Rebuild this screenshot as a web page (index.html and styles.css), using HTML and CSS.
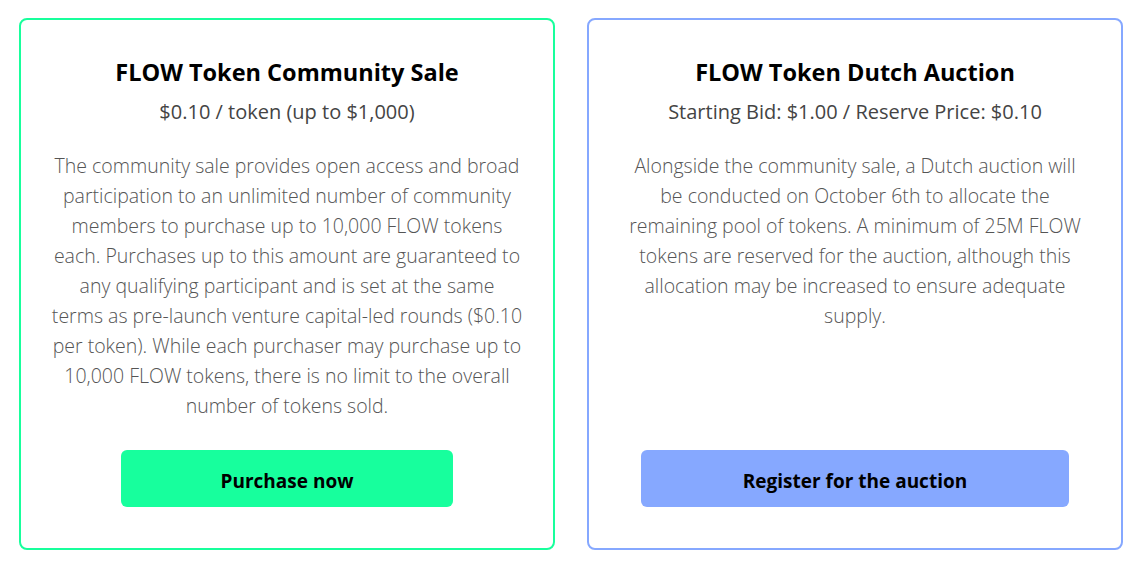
FILE: index.html
```html
<!DOCTYPE html>
<html>
<head>
<meta charset="utf-8">
<link rel="stylesheet" href="styles.css">
</head>
<body>
<div class="grid">
  <div class="card card-green">
    <h2 class="title">FLOW Token Community Sale</h2>
    <p class="sub">$0.10 / token (up to $1,000)</p>
    <p class="desc">The community sale provides open access and broad<br>participation to an unlimited number of community<br>members to purchase up to 10,000 FLOW tokens<br>each. Purchases up to this amount are guaranteed to<br>any qualifying participant and is set at the same<br>terms as pre-launch venture capital-led rounds ($0.10<br>per token). While each purchaser may purchase up to<br>10,000 FLOW tokens, there is no limit to the overall<br>number of tokens sold.</p>
    <a class="btn btn-green">Purchase now</a>
  </div>
  <div class="card card-blue">
    <h2 class="title">FLOW Token Dutch Auction</h2>
    <p class="sub">Starting Bid: $1.00 / Reserve Price: $0.10</p>
    <p class="desc">Alongside the community sale, a Dutch auction will<br>be conducted on October 6th to allocate the<br>remaining pool of tokens. A minimum of 25M FLOW<br>tokens are reserved for the auction, although this<br>allocation may be increased to ensure adequate<br>supply.</p>
    <a class="btn btn-blue">Register for the auction</a>
  </div>
</div>
</body>
</html>
```
FILE: styles.css
```css
* { box-sizing: border-box; }
html, body { margin: 0; padding: 0; background: #fff; }
body {
  font-family: "Open Sans", "Noto Sans", sans-serif;
  color: #000;
}
.grid {
  display: grid;
  grid-template-columns: 536px 536px;
  column-gap: 32px;
  padding: 18px 19px 16px 19px;
}
.card {
  border: 2px solid #18ff9c;
  border-radius: 8px;
  height: 532px;
  display: flex;
  flex-direction: column;
  align-items: center;
  padding: 38px 16px 41px;
  text-align: center;
}
.card-green { border-color: #18ff9c; }
.card-blue { border-color: #86a8ff; }
.title {
  margin: 0;
  font-size: 23.5px;
  font-weight: 700;
  line-height: 28px;
}
.sub {
  margin: 13px 0 0;
  font-size: 20px;
  line-height: 26px;
  font-weight: 400;
  color: #444;
}
.desc {
  margin: 26px 0 0;
  font-size: 19.5px;
  line-height: 30px;
  font-weight: 300;
  color: #555;
  white-space: nowrap;
}
.btn {
  margin-top: auto;
  display: block;
  height: 57px;
  padding: 5px 100px 0;
  line-height: 52px;
  border-radius: 6px;
  font-size: 19px;
  font-weight: 700;
  color: #000;
}
.btn-green { background: #17ff9d; }
.btn-blue { background: #86a8ff; padding: 5px 102px 0; }
```
